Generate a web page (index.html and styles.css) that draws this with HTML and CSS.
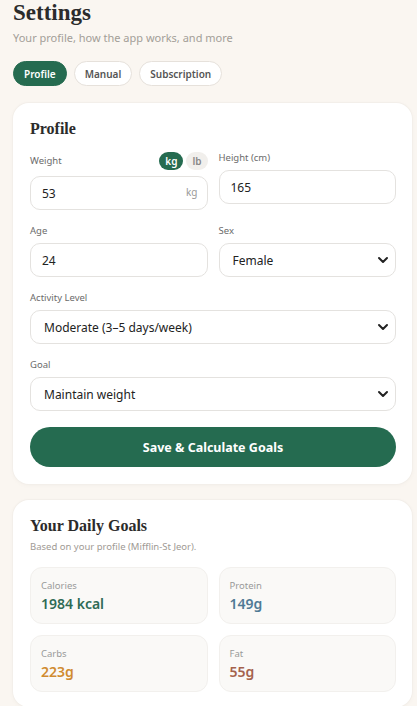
FILE: index.html
```html
<!DOCTYPE html>
<html lang="en">
<head>
    <meta charset="UTF-8">
    <meta name="viewport" content="width=device-width, initial-scale=1.0">
    <title>Settings</title>
    <link rel="stylesheet" href="styles.css">
</head>
<body>

<div class="page">
    <header class="page-head">
        <h1>Settings</h1>
        <p class="subtitle">Your profile, how the app works, and more</p>
    </header>

    <nav class="tabs">
        <button class="tab active">Profile</button>
        <button class="tab">Manual</button>
        <button class="tab">Subscription</button>
    </nav>

    <section class="card">
        <h2>Profile</h2>

        <div class="form">
            <div class="row">
                <div class="field">
                    <div class="label-row">
                        <label for="weight">Weight</label>
                        <div class="units">
                            <span class="unit on">kg</span>
                            <span class="unit">lb</span>
                        </div>
                    </div>
                    <div class="input-wrap">
                        <input type="text" id="weight" value="53">
                        <span class="suffix">kg</span>
                    </div>
                </div>
                <div class="field">
                    <label for="height">Height (cm)</label>
                    <input type="text" id="height" value="165">
                </div>
            </div>

            <div class="row">
                <div class="field">
                    <label for="age">Age</label>
                    <input type="text" id="age" value="24">
                </div>
                <div class="field">
                    <label for="sex">Sex</label>
                    <div class="select-wrap">
                        <select id="sex">
                            <option>Female</option>
                            <option>Male</option>
                        </select>
                        <svg class="chevron" width="12" height="8" viewBox="0 0 12 8"><path d="M2 2l4 4 4-4" fill="none" stroke="#222" stroke-width="2" stroke-linecap="round" stroke-linejoin="round"/></svg>
                    </div>
                </div>
            </div>

            <div class="field">
                <label for="activity">Activity Level</label>
                <div class="select-wrap">
                    <select id="activity">
                        <option>Moderate (3–5 days/week)</option>
                    </select>
                    <svg class="chevron" width="12" height="8" viewBox="0 0 12 8"><path d="M2 2l4 4 4-4" fill="none" stroke="#222" stroke-width="2" stroke-linecap="round" stroke-linejoin="round"/></svg>
                </div>
            </div>

            <div class="field">
                <label for="goal">Goal</label>
                <div class="select-wrap">
                    <select id="goal">
                        <option>Maintain weight</option>
                    </select>
                    <svg class="chevron" width="12" height="8" viewBox="0 0 12 8"><path d="M2 2l4 4 4-4" fill="none" stroke="#222" stroke-width="2" stroke-linecap="round" stroke-linejoin="round"/></svg>
                </div>
            </div>

            <button class="save">Save &amp; Calculate Goals</button>
        </div>
    </section>

    <section class="card goals">
        <h2>Your Daily Goals</h2>
        <p class="note">Based on your profile (Mifflin-St Jeor).</p>

        <div class="tiles">
            <div class="tile">
                <span class="tile-label">Calories</span>
                <span class="tile-value cal">1984 kcal</span>
            </div>
            <div class="tile">
                <span class="tile-label">Protein</span>
                <span class="tile-value protein">149g</span>
            </div>
            <div class="tile">
                <span class="tile-label">Carbs</span>
                <span class="tile-value carbs">223g</span>
            </div>
            <div class="tile">
                <span class="tile-label">Fat</span>
                <span class="tile-value fat">55g</span>
            </div>
        </div>
    </section>
</div>

</body>
</html>
```

FILE: styles.css
```css
body {
    font-family: 'Noto Sans', 'Open Sans', sans-serif;
    background-color: #faf6f1;
    margin: 0;
    padding: 0;
    color: #333;
}

.page {
    padding: 0 5px 0 13px;
}

.page-head h1 {
    margin: 0;
    font-family: 'Liberation Serif', 'Times New Roman', serif;
    font-size: 23px;
    line-height: 26px;
    font-weight: bold;
    color: #2b2b2b;
}

.subtitle {
    margin: 4px 0 0;
    font-size: 11px;
    line-height: 16px;
    color: #a39e98;
}

.tabs {
    display: flex;
    gap: 7px;
    margin-top: 15px;
}

.tab {
    height: 25px;
    padding: 0 10px;
    border: 1px solid #e6e1db;
    border-radius: 999px;
    background-color: #fff;
    color: #555;
    font-family: inherit;
    font-size: 10px;
    font-weight: 600;
}

.tab.active {
    background-color: #256b50;
    border-color: #256b50;
    color: #fff;
}

.card {
    margin-top: 17px;
    padding: 16px 16px 17px 17px;
    background-color: #ffffff;
    border-radius: 16px;
    box-shadow: 0 0 0 1px #f3efea, 0 1px 4px rgba(120, 100, 80, 0.06);
}

.card h2 {
    margin: 0;
    font-family: 'Liberation Serif', 'Times New Roman', serif;
    font-size: 16px;
    line-height: 20px;
    font-weight: bold;
    color: #2b2b2b;
}

.form {
    display: flex;
    flex-direction: column;
    gap: 13px;
    margin-top: 11px;
}

.row {
    display: grid;
    grid-template-columns: 1fr 1fr;
    gap: 11px;
}

.field {
    display: flex;
    flex-direction: column;
}

label {
    display: block;
    font-size: 9.5px;
    line-height: 16px;
    color: #6b6b6b;
    margin-bottom: 4px;
}

.label-row {
    display: flex;
    align-items: center;
    justify-content: space-between;
    height: 22px;
    margin-bottom: 4px;
}

.label-row label {
    margin-bottom: 0;
}

.units {
    display: flex;
    gap: 3px;
}

.unit {
    height: 18px;
    line-height: 18px;
    padding: 0 6px;
    border-radius: 999px;
    background-color: #f1efec;
    color: #888;
    font-size: 10px;
    font-weight: 600;
}

.unit.on {
    background-color: #256b50;
    color: #fff;
}

input, select {
    width: 100%;
    height: 34px;
    box-sizing: border-box;
    border: 1px solid #e4e2df;
    border-radius: 10px;
    background-color: #fff;
    font-family: inherit;
    font-size: 12px;
    color: #222;
    padding: 0 11px;
}

.input-wrap, .select-wrap {
    position: relative;
}

.suffix {
    position: absolute;
    right: 10px;
    top: 9px;
    font-size: 10px;
    color: #999;
}

select {
    appearance: none;
    -webkit-appearance: none;
    padding: 0 13px;
}

.chevron {
    position: absolute;
    right: 7px;
    top: 13px;
    pointer-events: none;
}

.save {
    margin-top: 3px;
    height: 40px;
    border: none;
    border-radius: 999px;
    background-color: #256b50;
    color: #fff;
    font-family: inherit;
    font-size: 12.5px;
    font-weight: bold;
}

.goals {
    margin-top: 16px;
    padding-bottom: 15px;
}

.note {
    margin: 4px 0 0;
    font-size: 9.5px;
    line-height: 14px;
    color: #a09a94;
}

.tiles {
    display: grid;
    grid-template-columns: 1fr 1fr;
    gap: 11px;
    margin-top: 13px;
}

.tile {
    display: flex;
    flex-direction: column;
    padding: 11px 10px 10px;
    background-color: #faf9f7;
    border: 1px solid #f2f0ed;
    border-radius: 12px;
}

.tile-label {
    font-size: 9.5px;
    line-height: 14px;
    color: #999;
}

.tile-value {
    margin-top: 2px;
    font-size: 14px;
    line-height: 18px;
    font-weight: 600;
}

.cal { color: #2f6b55; }
.protein { color: #4f7a95; }
.carbs { color: #d08b30; }
.fat { color: #a5624c; }
```
